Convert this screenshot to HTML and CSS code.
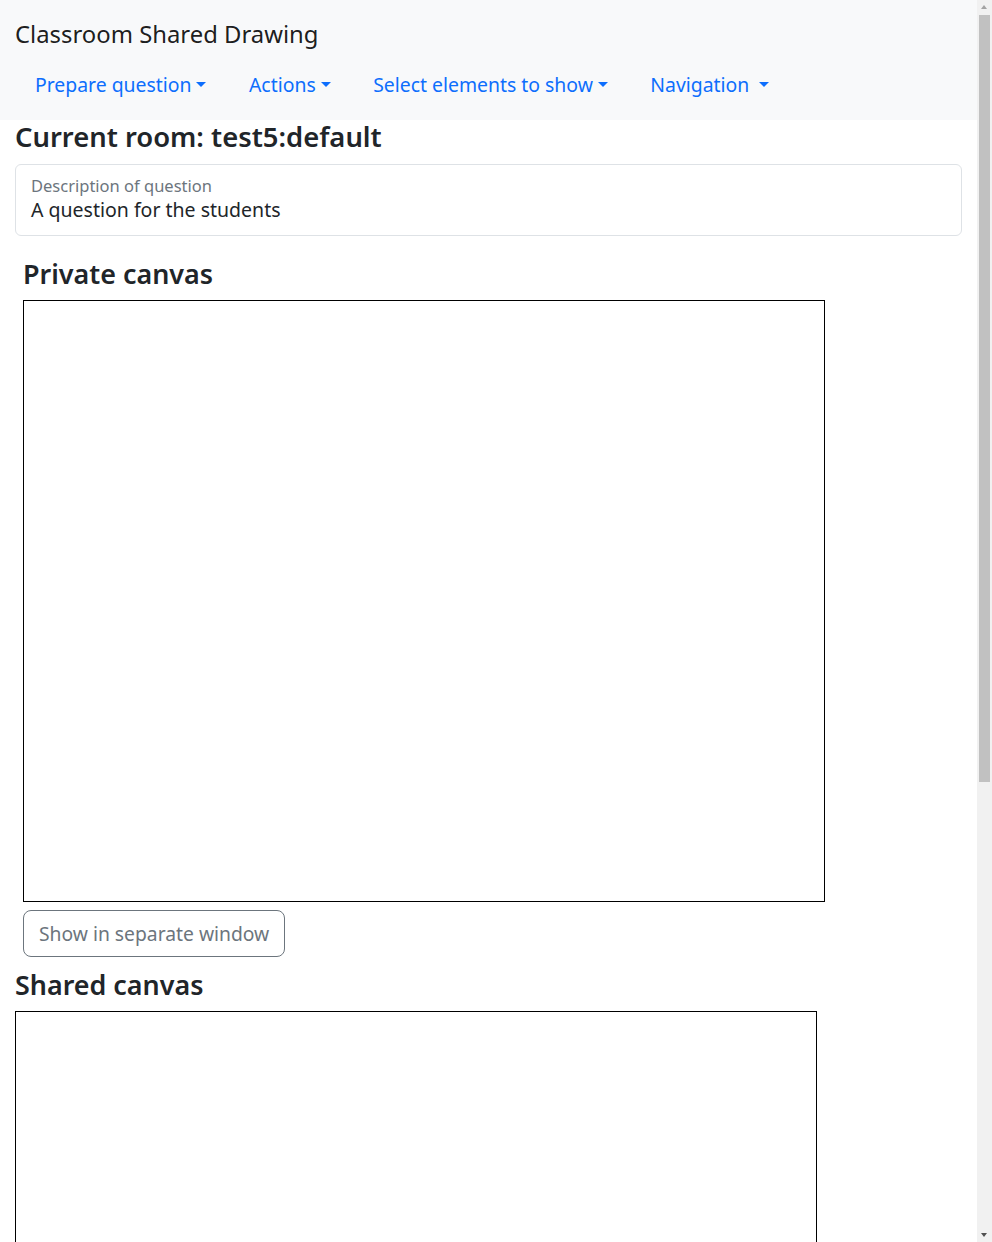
FILE: index.html
```html
<!DOCTYPE html>
<html lang="en">
<head>
<meta charset="utf-8">
<title>Classroom Shared Drawing</title>
<link rel="stylesheet" href="styles.css">
</head>
<body>
<div class="page">
  <nav class="navbar">
    <a class="brand" href="#">Classroom Shared Drawing</a>
    <ul class="nav">
      <li><a class="nav-link dropdown" href="#">Prepare question</a></li>
      <li><a class="nav-link dropdown" href="#">Actions</a></li>
      <li><a class="nav-link dropdown" href="#">Select elements to show</a></li>
      <li><a class="nav-link dropdown" href="#">Navigation&nbsp;</a></li>
    </ul>
  </nav>
  <main class="main">
    <h3 class="room-title">Current room: test5:default</h3>
    <div class="card">
      <div class="card-label">Description of question</div>
      <div class="card-value">A question for the students</div>
    </div>
    <section class="private">
      <h3 class="section-title">Private canvas</h3>
      <div class="canvas"></div>
      <button class="btn-outline" type="button">Show in separate window</button>
    </section>
    <section class="shared">
      <h3 class="section-title">Shared canvas</h3>
      <div class="canvas"></div>
    </section>
  </main>
</div>
<div class="scrollbar" aria-hidden="true">
  <span class="arrow arrow-up"></span>
  <span class="thumb"></span>
  <span class="arrow arrow-down"></span>
</div>
</body>
</html>
```
FILE: styles.css
```css
* { box-sizing: border-box; }
html, body { margin: 0; padding: 0; }
body {
  font-family: "Noto Sans", "Open Sans", sans-serif;
  color: #212529;
  background: #fff;
}
.page {
  margin-right: 15px;
}
.navbar {
  background: #f8f9fa;
  padding: 16px 15px 13px;
}
.brand {
  display: block;
  font-size: 23.85px;
  line-height: 36px;
  color: rgba(0, 0, 0, 0.9);
  text-decoration: none;
}
.nav {
  list-style: none;
  margin: 10px 0 0;
  padding: 0;
  display: flex;
}
.nav-link {
  display: block;
  padding: 8px 22.5px 8px 20px;
  font-size: 19.4px;
  line-height: 29px;
  color: #0d6efd;
  text-decoration: none;
}
.dropdown::after {
  content: "";
  display: inline-block;
  margin-left: 0.255em;
  vertical-align: 0.255em;
  border-top: 0.3em solid;
  border-right: 0.3em solid transparent;
  border-left: 0.3em solid transparent;
  border-bottom: 0;
}
.main {
  padding: 0 15px 357px;
}
.room-title {
  margin: 0;
  font-size: 27.4px;
  font-weight: 600;
  line-height: 33px;
}
.card {
  margin-top: 11px;
  border: 1px solid #dee2e6;
  border-radius: 6px;
  padding: 10px 15px 12px;
}
.card-label {
  font-size: 16.5px;
  line-height: 22px;
  color: #6c757d;
}
.card-value {
  font-size: 19.5px;
  line-height: 26px;
}
.private {
  padding: 0 8px;
  margin-top: 22px;
}
.section-title {
  margin: 0;
  font-size: 26.9px;
  font-weight: 600;
  line-height: 32px;
}
.canvas {
  width: 802px;
  height: 602px;
  border: 1px solid #000;
  background: #fff;
  margin-top: 10px;
}
.btn-outline {
  display: block;
  margin-top: 8px;
  font-family: inherit;
  font-size: 19.3px;
  line-height: 29px;
  padding: 8px 15px;
  color: #6c757d;
  background: transparent;
  border: 1px solid #6c757d;
  border-radius: 8px;
}
.shared {
  margin-top: 12px;
}
.scrollbar {
  position: fixed;
  top: 0;
  right: 0;
  width: 15px;
  height: 100vh;
  background: #f1f1f1;
}
.thumb {
  position: absolute;
  left: 2px;
  top: 15px;
  width: 11px;
  height: 767px;
  background: #c1c1c1;
}
.arrow {
  position: absolute;
  left: 4px;
  width: 0;
  height: 0;
  border-left: 3.5px solid transparent;
  border-right: 3.5px solid transparent;
}
.arrow-up {
  top: 5px;
  border-bottom: 4px solid #a3a3a3;
}
.arrow-down {
  bottom: 5px;
  border-top: 4px solid #505050;
}
```
